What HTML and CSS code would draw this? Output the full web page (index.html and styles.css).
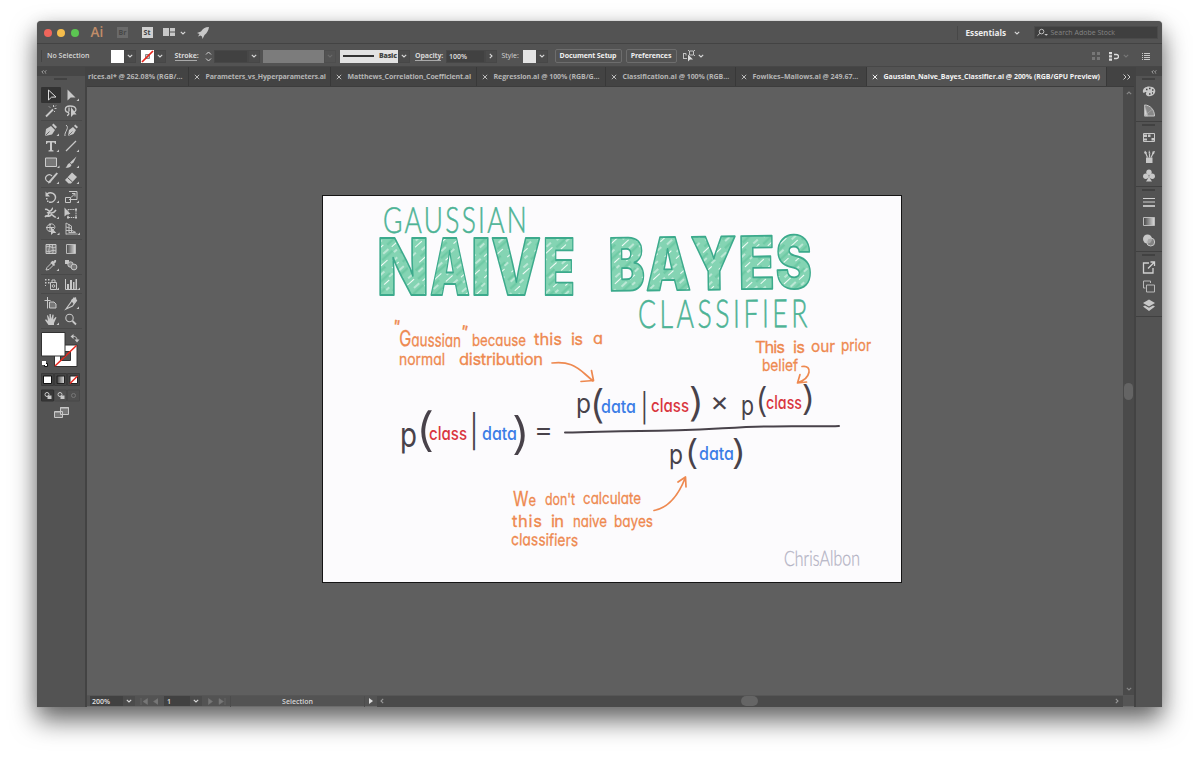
FILE: index.html
```html
<!DOCTYPE html>
<html lang="en">
<head>
<meta charset="utf-8">
<title>Adobe Illustrator</title>
<link rel="stylesheet" href="styles.css">
</head>
<body>
<svg class="defs" aria-hidden="true">
  <symbol id="caret" viewBox="0 0 6 6"><path d="M.8 1.8 3 4 5.200 1.800" fill="none" stroke="currentColor" stroke-width="1.100"/></symbol>
  <symbol id="close" viewBox="0 0 6 6"><path d="M.8.8 5.200 5.200M5.200.8.8 5.200" fill="none" stroke="currentColor" stroke-width="1"/></symbol>
  <symbol id="fold" viewBox="0 0 6 4"><path d="M2.500.3.800 2l1.700 1.700M5.300.3 3.600 2l1.700 1.700" fill="none" stroke="#bbb" stroke-width=".8"/></symbol>
</svg>
<div class="window">
  <header class="titlebar">
    <div class="lights"><i class="red"></i><i class="yellow"></i><i class="green"></i></div>
    <span class="logo">Ai</span>
    <span class="app dim">Br</span>
    <span class="app">St</span>
    <svg class="layouticon" viewBox="0 0 12 9"><path d="M0 0h6v8H0zM7 0h5v3.500H7zM7 4.500h5V8H7z"/></svg>
    <svg class="caret"><use href="#caret"/></svg>
    <svg class="rocket" viewBox="0 0 12 12"><path d="M12 0C8 0 5.500 2 4 4.500L0 6l2.500 1L1 9.500 3.500 8.500 5 9.500 5.500 12 7.500 8C10 6 11.500 3.500 12 0z"/></svg>
    <div class="title-right">
      <span class="workspace">Essentials</span>
      <svg class="caret"><use href="#caret"/></svg>
      <div class="search">
        <svg viewBox="0 0 12 9"><g fill="none" stroke="#c8c8c8"><circle cx="5" cy="3.500" r="2.500"/><path d="M3.200 5.400.5 8"/></g><path d="M8 6h4L10 8z" fill="#c8c8c8"/></svg>
        <span>Search Adobe Stock</span>
      </div>
    </div>
  </header>

  <div class="controlbar">
    <span class="nosel">No Selection</span>
    <i class="swatch white"></i><span class="dd"><svg class="caret"><use href="#caret"/></svg></span>
    <svg class="swatch none" viewBox="0 0 13 13"><path d="M0 0h13v13H0z" fill="#fff"/><path d="M4.500 4.500h4v4h-4z" fill="#ccc" stroke="#888"/><path d="M1 12 12 1" stroke="#e8251c" stroke-width="1.700"/></svg><span class="dd"><svg class="caret"><use href="#caret"/></svg></span>
    <span class="label stroke">Stroke:</span>
    <svg class="spin" viewBox="0 0 11 13"><path d="M3 4.500 5.500 2 8 4.500M3 8.500 5.500 11 8 8.500" fill="none" stroke="#d0d0d0"/></svg>
    <span class="field strokefield"></span><span class="dd"><svg class="caret"><use href="#caret"/></svg></span>
    <i class="profile"></i><span class="dd off"><svg class="caret"><use href="#caret"/></svg></span>
    <span class="brush"><i></i><b>Basic</b></span><span class="dd"><svg class="caret"><use href="#caret"/></svg></span>
    <span class="label opacity">Opacity:</span>
    <span class="field opfield">100%</span><span class="dd"><svg class="caret right"><use href="#caret"/></svg></span>
    <span class="style">Style:</span>
    <i class="swatch pale"></i><span class="dd"><svg class="caret"><use href="#caret"/></svg></span>
    <button class="btn setup">Document Setup</button>
    <button class="btn prefs">Preferences</button>
    <svg class="selicon" viewBox="0 0 12 12"><path d="M0 3.500h3M.5 3.500v5M0 8.500h4M3 3.500v2M6.500 1v4h4V1zM5 .5h1M11 .5h1M11 5.500h1" fill="none" stroke="#c4c4c4"/><path d="M5 4.500v7L7 9.500h3z" fill="#ddd"/></svg>
    <svg class="caret"><use href="#caret"/></svg>
    <div class="control-right">
      <svg class="gridicon" viewBox="0 0 8 8"><path d="M0 0h3v3H0zM5 0h3v3H5zM0 5h3v3H0zM5 5h3v3H5z" fill="#777"/></svg>
      <svg class="snap" viewBox="0 0 10 9"><path d="M0 0h3v2.200H0zM0 3.200h3v2.200H0zM0 6.500h3v2.300H0z" fill="#ddd"/><path d="M5 2.500h2.500a2 2 0 0 1 0 4H5" fill="none" stroke="#ddd" stroke-width="1.300"/></svg>
      <svg class="caret off"><use href="#caret"/></svg>
      <svg class="listicon" viewBox="0 0 8 7"><path d="M0 .5h1M2 .5h6M0 2.500h1M2 2.500h6M0 4.500h1M2 4.500h6M0 6.500h1M2 6.500h6" stroke="#c8c8c8"/></svg>
    </div>
  </div>

  <div class="main">
    <aside class="tools">
      <div class="collapse"><svg><use href="#fold"/></svg></div>
      <i class="grip"></i>
      <div class="toolgroup first">
        <svg class="on" viewBox="0 0 20 16"><path d="M7.500 3v10l3-2.800 4.500-.2z" fill="none" stroke="#ddd"/></svg>
        <svg viewBox="0 0 20 16"><path d="M6.500 2.500v11l3.200-3h4.800z"/><path class="m" d="M18 11.500V14h-2.500z"/></svg>
        <svg viewBox="0 0 20 16"><path d="M5 13.500 12 6.500" stroke="#c8c8c8" stroke-width="1.800"/><path d="M12.500 2v2M15.500 5.500h-2M8 3.500l1 1M14 9l-1-1M15 2.500l-1 1" stroke="#c8c8c8"/></svg>
        <svg viewBox="0 0 20 16"><path d="M8 9.500C3 9 3 3 9 3c7 0 7 5 4 6M7 9.500c2 1 0 3-1 3M8 4.500v4" fill="none" stroke="#c8c8c8" stroke-width="1.300"/><path d="M10 4v10l2.500-2.500h3z"/></svg>
      </div>
      <div class="toolgroup">
        <svg viewBox="0 0 20 16"><path d="M4 14 5 7l5-3 4 4-3 4.500zM11 3l1.500-1.500L16 5l-1.500 1.700z"/><path d="m4.500 13.500 4-4" stroke="#535353" stroke-width=".8"/><path class="m" d="M18 11.500V14h-2.500z"/></svg>
        <svg viewBox="0 0 20 16"><path d="M7 14 8 8l4-3 3 3-2.500 4zM13 4l1.200-1.500L17 5l-1.300 1.500z"/><path d="M4 14C3 10 9 6 5 3" fill="none" stroke="#c8c8c8"/><path d="m7.500 13.500 4-4" stroke="#535353" stroke-width=".7"/></svg>
        <svg viewBox="0 0 20 16"><path d="M5 3h10v3h-1l-.7-1.500H11V12l1.500.5v1h-5v-1L9 12V4.500H6.700L6 6H5z"/><path class="m" d="M18 11.500V14h-2.500z"/></svg>
        <svg viewBox="0 0 20 16"><path d="M5 13 15 3" stroke="#c8c8c8" stroke-width="1.200"/><path class="m" d="M18 11.500V14h-2.500z"/></svg>
        <svg viewBox="0 0 20 16"><path d="M4.500 4h11v8.500h-11z" fill="#777" stroke="#ccc"/><path class="m" d="M18.500 11.500V14H16z"/></svg>
        <svg viewBox="0 0 20 16"><path d="m15.500 2.500-3 6-2 1.500-1.500-1.500zM8.500 9l2 2c-1 2.500-3 3-6 2.500C6.500 12.500 6 10 8.500 9z"/><path class="m" d="M18 11.500V14h-2.500z"/></svg>
        <svg viewBox="0 0 20 16"><path d="M10 11.500A3.600 3.600 0 1 1 11 6" fill="none" stroke="#c8c8c8" stroke-width="1.200"/><path d="M17 3.500 9 13l-2 .5.500-2L15.500 2.500z"/><path class="m" d="M18 11.500V14h-2.500z"/></svg>
        <svg viewBox="0 0 20 16"><path d="m4 10 7-7.500 5 4.500-6 6.500H7.500z"/><path d="m6.500 7.500 5 4.500" stroke="#535353"/><path class="m" d="M18 11.500V14h-2.500z"/></svg>
      </div>
      <div class="toolgroup shapes">
        <svg viewBox="0 0 20 16"><path d="M6 5c4-3 9 0 8.500 4-.5 3-3.500 5-6.500 4" fill="none" stroke="#c8c8c8" stroke-width="1.400"/><path d="M4.500 2.500v5h4.500zM5 9h1.500v1.500H5zM6 11.500h1.500V13H6z"/><path class="m" d="M18 11.500V14h-2.500z"/></svg>
        <svg viewBox="0 0 20 16"><path d="M4.500 8.500h5v5h-5zM8 2.500h8v8H8M10 8.500l4-4M11 4.500h3v3" fill="none" stroke="#c8c8c8"/><path class="m" d="M18 11.500V14h-2.500z"/></svg>
        <svg viewBox="0 0 20 16"><path d="M4 4.500c3-1 3 2 5 1.500 2 0 2-3 3-3M4 12c2-3 4 1 6-2 1-2 3 3 5 2M6 8c3-2 5 3 9-3M9 6c-1 3-2 3-2 6" fill="none" stroke="#c8c8c8" stroke-width="1.500"/><path class="m" d="M18 11.500V14h-2.500z"/></svg>
        <svg viewBox="0 0 20 16"><path d="M3.500 2.500v9l3-2.500h3z"/><path d="M7 4.500h8v8H7z" fill="none" stroke="#c8c8c8" stroke-dasharray="1.500 .7"/><path d="M14 3.500h2v2h-2zM14 11.500h2v2h-2zM6 11.500h2v2H6z"/></svg>
        <svg viewBox="0 0 20 16"><path d="M10 3.500a3.500 3 0 1 0 0 7M8 3.200c6-2 8 5 3 6M5 6.500h8M9 3v8" fill="none" stroke="#c8c8c8"/><path d="M10 6v8l2.300-2h3z"/><path class="m" d="M18.500 11.500V14H16z"/></svg>
        <svg viewBox="0 0 20 16"><path d="M5 2v11.500M8 3v9M5 2l5.500 3v6M5 6l5.500 1.500M5 9.500h6M5 13h11.500M11 9.500l4 2M8 11.500h6" fill="none" stroke="#c8c8c8" stroke-width=".9"/><path class="m" d="M19 11.500V14h-2.500z"/></svg>
      </div>
      <div class="toolgroup">
        <svg viewBox="0 0 20 16"><path d="M5 3.500h10v9H5z" fill="#777" stroke="#c8c8c8"/><path d="M8 3c2 3-2 6 1 10M12 3c-2 3 2 6-1 10M5 6c4-2 6 2 10 0M5 10c4 2 6-2 10 0" fill="none" stroke="#c8c8c8"/></svg>
        <svg viewBox="0 0 20 16"><defs><linearGradient id="g"><stop stop-color="#444"/><stop offset="1" stop-color="#ddd"/></linearGradient></defs><path d="M5.500 3.500h9v9h-9z" fill="url(#g)" stroke="#bbb"/></svg>
        <svg viewBox="0 0 20 16"><path d="m5 13 1-2.500L10.500 6l2 2L8 12.500z" fill="none" stroke="#c8c8c8"/><path d="M9.500 5.500 13 9l1-1-.7-1.300C17 4 14.500 1 12.500 4.500l-1-.7z"/><path class="m" d="M18 11.500V14h-2.500z"/></svg>
        <svg viewBox="0 0 20 16"><path d="M4 3h4v4H4z"/><circle cx="9.500" cy="7.500" r="2.700" fill="#888" stroke="#c8c8c8"/><circle cx="13" cy="10" r="2.900" fill="#777" stroke="#c8c8c8"/></svg>
      </div>
      <div class="toolgroup">
        <svg viewBox="0 0 20 16"><path d="M9.500 6.500h6v7h-6zM11 6V4h3v2" fill="none" stroke="#c8c8c8"/><circle cx="12.500" cy="10" r="1.300" fill="none" stroke="#c8c8c8"/><path d="M4 3h1.500v1.500H4zM7 3h1.500v1.500H7zM4 6h1.500v1.500H4zM7 6h1.500v1.500H7zM4 9h1v1H4z"/><path class="m" d="M18 11.500V14h-2.500z"/></svg>
        <svg viewBox="0 0 20 16"><path d="M4.500 3v10.500h12" fill="none" stroke="#c8c8c8"/><path d="M6 8h2v5H6zM9 4h2v9H9zM12 6h1.500v7H12zM14.500 3H16v10h-1.500z"/><path class="m" d="M19 11.500V14h-2.500z"/></svg>
      </div>
      <div class="toolgroup">
        <svg viewBox="0 0 20 16"><path d="M6.500 2v11.500M3.500 5.500h6M8.500 7h4.500l2 2v4H8.500z" fill="#777" stroke="#c8c8c8"/></svg>
        <svg viewBox="0 0 20 16"><path d="M5 14 13 3l2.500 2.500-4 5.500z" fill="none" stroke="#c8c8c8" stroke-width="1.200"/><path d="m10 5 5-3 .5 4-3 3z"/><path class="m" d="M18 11.500V14h-2.500z"/></svg>
        <svg viewBox="0 0 20 16"><path d="M7.500 14 4 9l1-.7L7 10 6 4.500l1-.3L8.500 8V3h1.300l.5 5 1.200-4.500 1.200.2-.5 5L14.500 6l1 .5L13 12v2z"/><path class="m" d="M18 11.500V14h-2.500z"/></svg>
        <svg viewBox="0 0 20 16"><circle cx="8.500" cy="7" r="3.700" fill="none" stroke="#c8c8c8" stroke-width="1.100"/><path d="m11.500 10 3.500 3.500" stroke="#c8c8c8" stroke-width="1.800"/></svg>
      </div>
      <svg class="fillstroke" viewBox="0 0 40 40">
        <path d="M13.500 13h22.500v21.500H13.500z" fill="#fff" stroke="#333"/><path d="M19.500 19.500h10v9h-10z" fill="#535353" stroke="#333"/><path d="M14 34 35.500 13.500" stroke="#e8251c" stroke-width="1.500"/>
        <path d="M.5.500h23.500v23.500H.5z" fill="#fff" stroke="#333"/>
        <path d="M31 4.500c3-1 5 1 5 3.500" fill="none" stroke="#c8c8c8"/><path d="m32.500 2-3 2.500 3 2.500zM33.500 7.500h5L36 10.500z"/>
        <path d="M3.500 31.500h3v3h-3z" fill="#fff" stroke="#111"/><path d="M1 29h4v4H1z" fill="#fff"/>
      </svg>
      <svg class="modes" viewBox="0 0 40 34">
        <path d="M.5.5h12v12H.5zM13.500.5h12v12h-12zM26.500.5h12v12h-12z" fill="#444" stroke="#3a3a3a"/><path d="M2.500 3h8v7.500h-8z" fill="#fff" stroke="#111"/>
        <path d="M16 3h7.500v7.500H16z" fill="url(#g)" stroke="#222"/><path d="M29 3h7.500v7.500H29z" fill="#fff" stroke="#222"/><path d="m29 10.500 7.500-7.500" stroke="#e8251c" stroke-width="1.400"/>
        <path d="M.5 17h12v11H.5z" fill="#383838" stroke="#303030"/><path d="M13.500 17h12v11h-12zM26.500 17h12v11h-12z" fill="#505050" stroke="#484848"/>
        <g fill="none" stroke="#c8c8c8"><circle cx="6" cy="21.500" r="2"/><circle cx="19" cy="21.500" r="2"/></g><path d="M6.500 22.500h4V26h-4zM19.500 22.500h4V26h-4z"/><circle cx="32.500" cy="22.500" r="2" fill="none" stroke="#777"/>
      </svg>
      <svg class="screens" viewBox="0 0 16 12"><path d="M.5 4.500h8v6h-8zM6.500.5h8v7h-8z" fill="#777" stroke="#c8c8c8"/><path d="M6 1h9M1 5h6" stroke="#c8c8c8"/></svg>
    </aside>

    <section class="document">
      <nav class="tabs">
        <div class="tab t1"><span>rices.ai* @ 262.08% (RGB/...</span></div>
        <div class="tab t2"><svg><use href="#close"/></svg><span>Parameters_vs_Hyperparameters.ai</span></div>
        <div class="tab t3"><svg><use href="#close"/></svg><span>Matthews_Correlation_Coefficient.ai</span></div>
        <div class="tab t4"><svg><use href="#close"/></svg><span>Regression.ai @ 100% (RGB/G...</span></div>
        <div class="tab t5"><svg><use href="#close"/></svg><span>Classification.ai @ 100% (RGB...</span></div>
        <div class="tab t6"><svg><use href="#close"/></svg><span>Fowlkes–Mallows.ai @ 249.67...</span></div>
        <div class="tab active"><svg><use href="#close"/></svg><span>Gaussian_Naive_Bayes_Classifier.ai @ 200% (RGB/GPU Preview)</span></div>
        <svg class="more" viewBox="0 0 8 6"><path d="m.5.5 2.500 2.500-2.500 2.500M4.500.5 7 3 4.500 5.500" fill="none" stroke="#ccc"/></svg>
      </nav>
      <div class="workarea">
        <div class="canvas">
          <svg class="artboard" viewBox="323 196 578 386">
            <defs>
              <pattern id="hatch" width="31" height="23" patternUnits="userSpaceOnUse" patternTransform="rotate(-42)">
                <path d="M0 0h31v23H0z" fill="#84d4b3"/>
                <path d="M0 4h14M17 12h14M4 19h11" stroke="#6fcaa5" stroke-width="2.500"/>
                <path d="M19 1.500h9M2 8.500h7M12 15.500h9M24 20h6M11 6h5M0 14h4M22 8h7M5 22h6" stroke="#f2fbf7" stroke-width="1"/>
              </pattern>
            </defs>
            <g class="thin green-ink">
              <text x="383" y="233" font-size="36" letter-spacing="3" textLength="146" lengthAdjust="spacingAndGlyphs" transform="rotate(-.2 383 232)">GAUSSIAN</text>
              <text x="638" y="328" font-size="39" letter-spacing="5" textLength="173" lengthAdjust="spacingAndGlyphs" transform="rotate(-.3 638 328)">CLASSIFIER</text>
            </g>
            <g class="block">
              <text font-size="78" y="294.500"><tspan x="377" textLength="52" lengthAdjust="spacingAndGlyphs">N</tspan><tspan x="430" textLength="40" lengthAdjust="spacingAndGlyphs">A</tspan><tspan x="471" textLength="20" lengthAdjust="spacingAndGlyphs">I</tspan><tspan x="491" textLength="50" lengthAdjust="spacingAndGlyphs">V</tspan><tspan x="543" textLength="32" lengthAdjust="spacingAndGlyphs">E</tspan></text>
              <text font-size="73" y="291" transform="rotate(-.8 611 290)"><tspan x="609" textLength="36" lengthAdjust="spacingAndGlyphs">B</tspan><tspan x="646" textLength="45" lengthAdjust="spacingAndGlyphs">A</tspan><tspan x="691" textLength="46" lengthAdjust="spacingAndGlyphs">Y</tspan><tspan x="739" textLength="36" lengthAdjust="spacingAndGlyphs">E</tspan><tspan x="776" textLength="36" lengthAdjust="spacingAndGlyphs">S</tspan></text>
            </g>
            <g class="hand orange-ink">
              <text x="393" y="332" font-size="17" transform="rotate(8 396 324)">"</text>
              <text x="399" y="346" textLength="62" lengthAdjust="spacingAndGlyphs" transform="rotate(1 399 347)"><tspan font-size="22">G</tspan><tspan font-size="18">aussian</tspan></text>
              <text x="461" y="337" font-size="17" transform="rotate(12 463 328)">"</text>
              <text x="472" y="346" textLength="54" lengthAdjust="spacingAndGlyphs">because</text>
              <text x="534" y="345" textLength="28" lengthAdjust="spacing">this</text>
              <text x="571" y="345" textLength="12" lengthAdjust="spacing">is</text>
              <text x="593" y="344" textLength="10" lengthAdjust="spacingAndGlyphs">a</text>
              <text x="399" y="365" textLength="46" lengthAdjust="spacingAndGlyphs">normal</text>
              <text x="459" y="365" textLength="84" lengthAdjust="spacing">distribution</text>
              <text x="755" y="353" textLength="30" lengthAdjust="spacing">This</text>
              <text x="793" y="353" textLength="12" lengthAdjust="spacing">is</text>
              <text x="811" y="352" textLength="24" lengthAdjust="spacingAndGlyphs">our</text>
              <text x="841" y="351" textLength="30" lengthAdjust="spacingAndGlyphs">prior</text>
              <text x="762" y="371" textLength="36" lengthAdjust="spacingAndGlyphs">belief</text>
              <text x="513" y="506" textLength="23" lengthAdjust="spacingAndGlyphs"><tspan font-size="20">W</tspan>e</text>
              <text x="545" y="505" textLength="30" lengthAdjust="spacingAndGlyphs">don't</text>
              <text x="583" y="504" textLength="58" lengthAdjust="spacingAndGlyphs">calculate</text>
              <text x="512" y="527" textLength="30" lengthAdjust="spacing">this</text>
              <text x="551" y="527" textLength="13" lengthAdjust="spacing">in</text>
              <text x="573" y="527" textLength="34" lengthAdjust="spacingAndGlyphs">naive</text>
              <text x="614" y="527" textLength="39" lengthAdjust="spacingAndGlyphs">bayes</text>
              <text x="511" y="545" textLength="67" lengthAdjust="spacingAndGlyphs" transform="rotate(1 511 545)">classifiers</text>
            </g>
            <g class="arrows">
              <path d="M552 363c16-2 24 3 33 11l8 7M581 381.500l12.500-1-2-10"/>
              <path d="M802 366.500c11-2 9 12-4 16M800 374.500l-2.500 8.500 9-1"/>
              <path d="M654 510.500c16-3 25-17 31-32M678 482l7.500-5 .5 10"/>
            </g>
            <g class="formula">
              <g class="dark">
                <text x="400" y="447" font-size="34" textLength="17" lengthAdjust="spacingAndGlyphs">p</text>
                <text class="paren" x="415" y="446" font-size="46" textLength="20" lengthAdjust="spacingAndGlyphs">(</text>
                <text class="paren" x="469" y="443" font-size="32">|</text>
                <text class="paren" x="511" y="449" font-size="44" textLength="20" lengthAdjust="spacingAndGlyphs">)</text>
                <text x="534" y="438" font-size="24" textLength="19" lengthAdjust="spacingAndGlyphs">=</text>
                <text x="576" y="413" font-size="26" textLength="15" lengthAdjust="spacingAndGlyphs">p</text>
                <text class="paren" x="589" y="418" font-size="39" textLength="16" lengthAdjust="spacingAndGlyphs">(</text>
                <text class="paren" x="640" y="418" font-size="28">|</text>
                <text class="paren" x="688" y="416" font-size="39" textLength="17" lengthAdjust="spacingAndGlyphs">)</text>
                <text x="710" y="411" font-size="27" textLength="19" lengthAdjust="spacingAndGlyphs">×</text>
                <text x="741" y="415" font-size="26" textLength="13" lengthAdjust="spacingAndGlyphs">p</text>
                <text class="paren" x="755" y="412" font-size="34" textLength="13" lengthAdjust="spacingAndGlyphs">(</text>
                <text class="paren" x="801" y="410" font-size="34" textLength="15" lengthAdjust="spacingAndGlyphs">)</text>
                <text x="669" y="464" font-size="27" textLength="14" lengthAdjust="spacingAndGlyphs">p</text>
                <text class="paren" x="684" y="464" font-size="34" textLength="15" lengthAdjust="spacingAndGlyphs">(</text>
                <text class="paren" x="731" y="464" font-size="34" textLength="16" lengthAdjust="spacingAndGlyphs">)</text>
                <path d="M565 432.500c30 0 40-1.500 75-1.500 60 0 90-4 128-4.500 30-1 50 .5 71-.5"/>
              </g>
              <g class="red-ink">
                <text x="429" y="440" textLength="38" lengthAdjust="spacingAndGlyphs">class</text>
                <text x="651" y="412" textLength="38" lengthAdjust="spacingAndGlyphs">class</text>
                <text x="766" y="409" textLength="36" lengthAdjust="spacingAndGlyphs">class</text>
              </g>
              <g class="blue-ink">
                <text x="482" y="440" textLength="35" lengthAdjust="spacingAndGlyphs">data</text>
                <text x="601" y="413" textLength="35" lengthAdjust="spacingAndGlyphs">data</text>
                <text x="699" y="460" textLength="35" lengthAdjust="spacingAndGlyphs">data</text>
              </g>
            </g>
            <text class="signature" x="784" y="566" font-size="21" textLength="76" lengthAdjust="spacingAndGlyphs" transform="rotate(-.5 784 566)">ChrisAlbon</text>
          </svg>
        </div>
        <div class="vscroll"><svg class="caret up"><use href="#caret"/></svg><i></i><svg class="caret"><use href="#caret"/></svg></div>
      </div>
      <footer class="status">
        <span class="field zoomfield">200%</span><span class="dd"><svg class="caret"><use href="#caret"/></svg></span>
        <svg class="first-prev" viewBox="0 0 18 7"><path d="M1 0v7M7.500.5v6L3 3.500zM18 .5v6l-4.500-3z" fill="#777" stroke="#777" stroke-width=".5"/></svg>
        <span class="field pagefield">1</span><span class="dd"><svg class="caret"><use href="#caret"/></svg></span>
        <svg class="next-last" viewBox="0 0 18 7"><path d="M17 0v7M11 .5v6l4.500-3zM.5.5v6l4-3z" fill="#777" stroke="#777" stroke-width=".5"/></svg>
        <span class="selection">Selection</span>
        <svg class="play" viewBox="0 0 4 6"><path d="M0 0v6l4-3z" fill="#ddd"/></svg>
        <div class="hscroll"><svg class="caret left"><use href="#caret"/></svg><i></i><svg class="caret right"><use href="#caret"/></svg></div>
        <i class="corner"></i>
      </footer>
    </section>

    <aside class="dock">
      <div class="collapse"><svg><use href="#fold"/></svg></div>
      <div class="dockgroup"><i class="grip"></i>
        <svg viewBox="0 0 14 14"><path d="M1 8C0 4 4 2 7 2c5 0 7 3 6 6-1 4-8 5-9 2-.5-2 1-1.500 0-2.500-1-.5-2 1.500-3 .5z"/><path d="M4 5h1.500M7 4h1.500M10 5.500h1.500M10 8.500H11M7 9.500h1.500" stroke="#444" stroke-width="1.500"/></svg>
        <svg viewBox="0 0 14 14"><path d="M2.500 1.500v11h10c0-6-4-11-10-11z" fill="#888" stroke="#c8c8c8"/><path d="M2.500 2 6 12.500H2.500zM3 12 10 6" fill="#d4d4d4" stroke="#aaa" stroke-width=".7"/></svg>
      </div>
      <div class="dockgroup"><i class="grip"></i>
        <svg viewBox="0 0 14 14"><path d="M1.500 3h11v8h-11z" fill="#555" stroke="#c8c8c8"/><path d="M2 4h3v2.500H2zM6 4h2.500v2.500H6zM9.500 7.500H12V10H9.500zM2 8h3v2H2z"/></svg>
        <svg viewBox="0 0 14 14"><path d="M4 8h6.500v5.500H4z"/><path d="m5.500 8-2-5M7.500 8V4M9 8l2-4" stroke="#c8c8c8" stroke-width="1.200"/><path d="M2 3.500 3 1l2 2.500-1.500 1zM6.500 4 7 .5 8.500 4zM10 5l.5-3 2.500-.5L12 4.500z"/></svg>
        <svg viewBox="0 0 14 14"><circle cx="7" cy="3.800" r="2.700"/><circle cx="3.800" cy="7.800" r="2.700"/><circle cx="10.200" cy="7.800" r="2.700"/><path d="m7 5 1 5 2 3H4l2-3z"/></svg>
      </div>
      <div class="dockgroup"><i class="grip"></i>
        <svg viewBox="0 0 14 14"><path d="M1 3h12M1 6.500h12" stroke="#d0d0d0"/><path d="M1 10.500h12" stroke="#d0d0d0" stroke-width="1.700"/></svg>
        <svg viewBox="0 0 14 14"><path d="M1.500 3h11v8h-11z" fill="url(#g)" stroke="#bbb"/></svg>
        <svg viewBox="0 0 14 14"><circle cx="5.500" cy="5.500" r="4.500"/><circle cx="8.700" cy="8.500" r="4" fill="#999" fill-opacity=".7" stroke="#c8c8c8"/></svg>
      </div>
      <div class="dockgroup"><i class="grip"></i>
        <svg viewBox="0 0 14 14"><path d="M7 2.500H1.500v10h9.500V7.500M6 8l6-6M8.500 1.500h4v4" fill="none" stroke="#d0d0d0" stroke-width="1.300"/></svg>
        <svg viewBox="0 0 14 14"><path d="M3.500 8.500h-2v-7h7v2M4.500 5.500h8v7h-8z" fill="none" stroke="#b8b8b8"/></svg>
        <svg viewBox="0 0 14 14"><path d="m7 1 6 3.500L7 8 1 4.500z"/><path d="M1 8 3 7l4 2.300L11 7l2 1-6 4.500z"/></svg>
      </div>
    </aside>
  </div>
</div>
</body>
</html>
```
FILE: styles.css
```css
* { box-sizing: border-box; }
body {
  margin: 0;
  width: 1199px;
  height: 760px;
  overflow: hidden;
  background: #fff;
  padding: 21px 37px 53px;
  font: 600 7px/10px "Open Sans", "Noto Sans", sans-serif;
  color: #d6d6d6;
}
.defs { position: absolute; width: 0; height: 0; }
svg { display: block; flex: none; fill: #c8c8c8; }
i { display: block; flex: none; }
.window {
  display: flex;
  flex-direction: column;
  width: 1125px;
  height: 686px;
  background: #535353;
  border-radius: 4px 4px 0 0;
  box-shadow: 0 0 1px #888, 0 13px 26px rgba(0,0,0,.6), 0 2px 18px rgba(0,0,0,.08);
}
.caret { width: 6px; height: 6px; color: #d8d8d8; }
.caret.right { transform: rotate(-90deg); }
.caret.left { transform: rotate(90deg); }
.caret.up { transform: rotate(180deg); }
.off { color: #747474; }
.off .caret { color: #6a6a6a; }

.titlebar {
  display: flex;
  align-items: center;
  height: 23px;
  padding: 1px 4.500px 0 6.500px;
  border-bottom: 1px solid #434343;
}
.lights { display: flex; gap: 5.500px; width: 47px; }
.lights i { width: 8px; height: 8px; border-radius: 50%; }
.red { background: #f0655b; }
.yellow { background: #f5bd4c; }
.green { background: #5cc552; }
.logo { width: 26.500px; font: 600 13.500px/18px "Open Sans", sans-serif; color: #c18d69; padding-bottom: 2px; }
.app {
  width: 11px;
  height: 11px;
  margin-right: 13.500px;
  background: #d0d0d0;
  color: #444;
  font: 700 7px/11px "Open Sans", sans-serif;
  text-align: center;
}
.app.dim { background: #6a6a6a; color: #484848; }
.layouticon { width: 12px; height: 9px; margin: 0 5px 0 -3px; }
.rocket { width: 12px; height: 12px; margin-left: 11px; }
.title-right { display: flex; align-items: center; margin-left: auto; height: 14px; border-left: 1px solid #474747; padding-left: 8px; }
.workspace { width: 48px; font-size: 8.200px; color: #eee; font-weight: 700; }
.search {
  display: flex;
  align-items: center;
  gap: 3px;
  width: 124px;
  height: 13px;
  margin-left: 14px;
  padding-left: 2px;
  background: #3f3f3f;
  border: 1px solid #4a4a4a;
  color: #858585;
  font-weight: 400;
}
.search svg { width: 11px; height: 9px; }

.controlbar { display: flex; align-items: center; height: 23px; padding: 2px 12px 0 4px; border-bottom: 1px solid #474747; }
.nosel { width: 70px; flex: none; padding-left: 5px; border-left: 1px solid #444; line-height: 12px; }
.swatch { width: 13px; height: 13px; }
.white { background: #fff; }
.pale { background: #e4e4e4; }
.dd { display: flex; align-items: center; justify-content: center; width: 12px; height: 13px; flex: none; background: #4b4b4b; border: 1px solid #474747; }
.swatch.none { margin-left: 5px; }
.label { border-bottom: 1px solid #aaa; line-height: 8px; font-weight: 700; letter-spacing: -.1px; white-space: nowrap; flex: none; }
.stroke { margin-left: 8.500px; width: 22px; }
.spin { width: 11px; height: 13px; margin-left: 6px; }
.field { display: block; flex: none; height: 13px; line-height: 12px; background: #414141; border: 1px solid #474747; color: #e0e0e0; padding-left: 2px; }
.strokefield { width: 34px; margin-left: .5px; }
.profile { width: 61px; height: 13px; margin-left: 3px; background: #7c7c7c; }
.dd.off { background: none; border-color: #4e4e4e; }
.brush { display: flex; align-items: center; gap: 5px; width: 58px; height: 13px; flex: none; margin-left: 4px; padding-left: 3px; background: #e2e2e2; color: #444; }
.brush i { width: 31px; height: 1.500px; background: #333; }
.brush b { letter-spacing: -.2px; }
.opacity { width: 26px; margin: 0 5px; }
.opfield { width: 39px; }
.style { width: 21px; flex: none; margin-left: 4.500px; font-weight: 500; }
.btn {
  height: 14px;
  padding: 0;
  background: #535353;
  border: 1px solid #6d6d6d;
  border-radius: 2px;
  color: #f0f0f0;
  font: 700 7px/10px "Open Sans", sans-serif;
  letter-spacing: -.1px;
  white-space: nowrap;
  flex: none;
}
.setup { width: 67px; margin-left: 7px; }
.prefs { width: 51px; margin: 0 6px 0 4px; }
.selicon { width: 12px; height: 12px; margin-right: 3px; }
.control-right { display: flex; align-items: center; margin-left: auto; }
.gridicon { width: 8px; height: 8px; margin-right: 9px; }
.snap { width: 10px; height: 9px; margin-right: 4px; }
.control-right .caret { color: #777; margin-right: 13px; }
.listicon { width: 8px; height: 7px; }

.main { display: flex; flex: 1; min-height: 0; }
.collapse { display: flex; align-items: center; height: 9px; background: #464646; padding-left: 4px; }
.collapse svg { width: 6px; height: 4px; }
.tools { width: 50px; flex: none; border-right: 2px solid #434343; }
.tools .grip { width: 13px; height: 2px; margin: 2px 0 6px 17px; background: #424242; }
.toolgroup { display: grid; grid-template-columns: 20px 20px; width: 41px; margin-left: 4px; padding: 1px 0; border-bottom: 1px solid #494949; }
.toolgroup.shapes { padding-bottom: 2px; }
.toolgroup svg { width: 20px; height: 16px; }
.toolgroup .on { background: #333; border-radius: 1px; }
.m { fill: #c8c8c8; }
.fillstroke { width: 40px; height: 40px; margin: 3px 0 0 4px; }
.modes { width: 40px; height: 34px; margin: 1px 0 0 4px; }
.screens { width: 16px; height: 12px; margin: 0 0 0 17px; }

.document { display: flex; flex-direction: column; width: 1049px; flex: none; border-right: 2px solid #434343; }
.tabs { display: flex; height: 20px; background: #434343; border-bottom: 1px solid #3c3c3c; color: #b5b5b5; letter-spacing: -.04px; }
.tab { display: flex; align-items: center; gap: 6px; padding-left: 4.500px; border-right: 1px solid #383838; white-space: nowrap; flex: none; font-weight: 700; }
.tab svg { width: 6px; height: 6px; color: #bbb; }
.t1 { width: 102px; padding-left: 1px; letter-spacing: 0; }
.t2 { width: 142px; letter-spacing: -.13px; }
.t3 { width: 146px; letter-spacing: -.1px; }
.t4 { width: 129px; }
.t5 { width: 130px; }
.t6 { width: 131px; }
.active { width: 240px; background: #535353; color: #f2f2f2; letter-spacing: -.03px; }
.active svg { color: #eee; }
.more { width: 8px; height: 6px; margin: 7px 0 0 16px; }
.workarea { display: flex; flex: 1; }
.canvas { display: flex; align-items: flex-start; flex: 1; padding: 108px 0 0 235px; background: #5f5f5f; }
.artboard { width: 580px; height: 388px; background: #fcfbfd; border: 1px solid #151515; }
.vscroll { display: flex; flex-direction: column; align-items: center; justify-content: space-between; width: 11px; padding: 3px 0; background: #4a4a4a; }
.vscroll .caret { color: #888; }
.vscroll i { width: 9px; height: 17px; border-radius: 5px; background: #646464; }
.status { display: flex; align-items: center; height: 12px; padding-left: 3px; background: #535353; border-bottom: 1px solid #6c6c6c; border-top: 1px solid #565656; }
.status .field, .status .dd { height: 10px; line-height: 11px; border: 0; }
.zoomfield { width: 33px; }
.first-prev, .next-last { width: 18px; height: 7px; }
.first-prev { margin: 0 6px 0 5px; }
.status .pagefield { width: 26px; padding-left: 3px; }
.next-last { margin: 0 4px 0 6px; }
.selection { width: 135px; border: solid #4c4c4c; border-width: 0 1px; text-align: center; line-height: 11px; }
.play { width: 4px; height: 6px; margin: 0 4px 0 4px; }
.hscroll { display: flex; align-items: center; justify-content: space-between; flex: 1; height: 11px; padding: 0 3px 0 2px; background: #4a4a4a; }
.hscroll .caret { color: #999; }
.hscroll i { width: 17px; height: 10px; border-radius: 5px; background: #656565; }
.corner { width: 11px; height: 10px; background: #555; }

.dock { flex: 1; }
.dock .collapse { justify-content: flex-end; padding-right: 5px; }
.dockgroup { padding: 2px 0 1px; border-bottom: 1px solid #404040; }
.dock .grip { width: 13px; height: 2px; margin: 0 0 2px 6px; background: #414141; }
.dockgroup svg { width: 14px; height: 19px; margin-left: 6px; }

.artboard text { font-family: Inter, sans-serif; font-feature-settings: "cv11" 1; }
.artboard .thin text { font-family: Lato, sans-serif; font-weight: 300; }
.green-ink text { fill: #4db395; stroke: #4db395; stroke-width: .5; }
.block text { font-weight: 900; fill: url(#hatch); stroke: #3caa8c; stroke-width: 1.800; stroke-linejoin: round; }
.hand text { font-size: 16.500px; font-weight: 400; }
.orange-ink text { fill: #ee8950; stroke: #ee8950; stroke-width: .3; }
.arrows path { fill: none; stroke: #ee8950; stroke-width: 1.700; stroke-linecap: round; stroke-linejoin: round; }
.dark text { fill: #48424a; font-weight: 400; }
.dark .paren { font-weight: 300; }
.dark path { fill: none; stroke: #48424a; stroke-width: 2; stroke-linecap: round; }
.red-ink text { fill: #d93640; font-size: 18px; font-weight: 500; }
.blue-ink text { fill: #3b7de6; font-size: 18px; font-weight: 500; }
.artboard .signature { font-family: Lato, sans-serif; font-weight: 300; fill: #b4b3c4; stroke: #b4b3c4; stroke-width: .3; }
```
